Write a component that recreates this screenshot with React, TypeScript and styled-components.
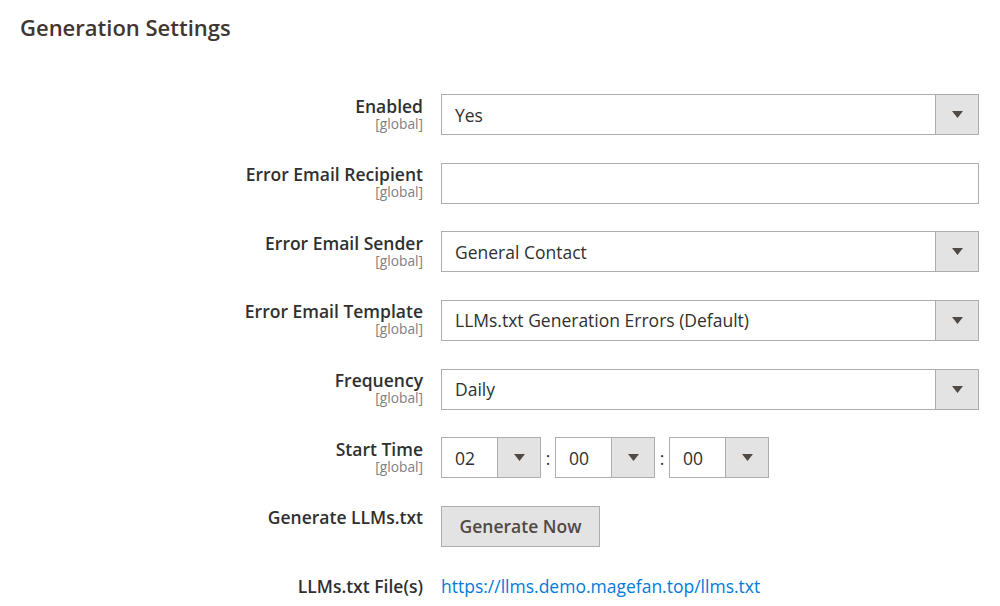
import React from 'react';
import styled, { createGlobalStyle } from 'styled-components';

const GlobalStyle = createGlobalStyle`
  body {
    margin: 0;
    background: #ffffff;
    font-family: 'Open Sans', 'Liberation Sans', sans-serif;
    color: #303030;
  }
`;

type Field =
  | { kind: 'select'; label: string; value: string }
  | { kind: 'input'; label: string }
  | { kind: 'time'; label: string; parts: string[] }
  | { kind: 'button'; label: string; text: string }
  | { kind: 'link'; label: string; href: string };

const fields: Field[] = [
  { kind: 'select', label: 'Enabled', value: 'Yes' },
  { kind: 'input', label: 'Error Email Recipient' },
  { kind: 'select', label: 'Error Email Sender', value: 'General Contact' },
  { kind: 'select', label: 'Error Email Template', value: 'LLMs.txt Generation Errors (Default)' },
  { kind: 'select', label: 'Frequency', value: 'Daily' },
  { kind: 'time', label: 'Start Time', parts: ['02', '00', '00'] },
  { kind: 'button', label: 'Generate LLMs.txt', text: 'Generate Now' },
  { kind: 'link', label: 'LLMs.txt File(s)', href: 'https://llms.demo.magefan.top/llms.txt' },
];

const Arrow = () => (
  <svg width="11" height="7" viewBox="0 0 11 7">
    <path d="M0 0 L11 0 L5.5 7 Z" fill="#514943" />
  </svg>
);

const App = () => {
  return (
    <Page>
      <GlobalStyle />
      <Title>Generation Settings</Title>
      <Fieldset>
        {fields.map((f) => (
          <Row key={f.label}>
            <Label>
              <LabelText>{f.label}</LabelText>
              {f.kind !== 'button' && f.kind !== 'link' && <Scope>[global]</Scope>}
            </Label>
            <Control>
              {f.kind === 'select' && (
                <Select>
                  <SelectValue>{f.value}</SelectValue>
                  <SelectToggle>
                    <Arrow />
                  </SelectToggle>
                </Select>
              )}
              {f.kind === 'input' && <TextInput />}
              {f.kind === 'time' && (
                <TimeGroup>
                  {f.parts.map((p, i) => (
                    <React.Fragment key={i}>
                      {i > 0 && <Colon>:</Colon>}
                      <Select $width={100}>
                        <SelectValue>{p}</SelectValue>
                        <SelectToggle>
                          <Arrow />
                        </SelectToggle>
                      </Select>
                    </React.Fragment>
                  ))}
                </TimeGroup>
              )}
              {f.kind === 'button' && <Button>{f.text}</Button>}
              {f.kind === 'link' && <Link href={f.href}>{f.href}</Link>}
            </Control>
          </Row>
        ))}
      </Fieldset>
    </Page>
  );
};

export default App;

const Page = styled.div`
  width: 1000px;
  height: 606px;
  overflow: hidden;
`;

const Title = styled.h2`
  margin: 0;
  padding: 14px 0 0 20px;
  font-size: 22px;
  font-weight: 600;
  line-height: 26px;
  color: #41362f;
`;

const Fieldset = styled.div`
  display: flex;
  flex-direction: column;
  gap: 27.67px;
  margin-top: 54px;
`;

const Row = styled.div`
  display: grid;
  grid-template-columns: 423px 538px;
  column-gap: 18px;
  align-items: start;
`;

const Label = styled.div`
  display: flex;
  flex-direction: column;
  align-items: flex-end;
  text-align: right;
  padding-top: 1.5px;
`;

const LabelText = styled.div`
  font-size: 17.5px;
  font-weight: 600;
  line-height: 20px;
  height: 20px;
  color: #303030;
`;

const Scope = styled.div`
  font-size: 13.75px;
  line-height: 15px;
  height: 15px;
  color: #808080;
`;

const Control = styled.div`
  display: flex;
  min-height: 41px;
  box-sizing: border-box;
`;

const Select = styled.div<{ $width?: number }>`
  display: flex;
  width: ${(p) => (p.$width ? `${p.$width}px` : '100%')};
  height: 41px;
  box-sizing: border-box;
  border: 1px solid #adadad;
  background: #ffffff;
`;

const SelectValue = styled.div`
  flex: 1;
  display: flex;
  align-items: center;
  padding-left: 13px;
  font-size: 17.5px;
  color: #303030;
`;

const SelectToggle = styled.div`
  width: 42px;
  display: flex;
  align-items: center;
  justify-content: center;
  background: #e3e3e3;
  border-left: 1px solid #adadad;
`;

const TextInput = styled.div`
  width: 100%;
  height: 41px;
  box-sizing: border-box;
  border: 1px solid #adadad;
`;

const TimeGroup = styled.div`
  display: flex;
  align-items: center;
  gap: 3.5px;
`;

const Colon = styled.span`
  width: 7px;
  text-align: center;
  font-size: 17.5px;
  color: #303030;
`;

const Button = styled.button`
  height: 41px;
  width: 159px;
  box-sizing: border-box;
  border: 1px solid #adadad;
  background: #e3e3e3;
  font-family: 'Open Sans', 'Liberation Sans', sans-serif;
  font-size: 17.5px;
  font-weight: 600;
  color: #514943;
  padding: 0;
`;

const Link = styled.a`
  padding-top: 1.5px;
  font-size: 17.5px;
  line-height: 20px;
  color: #007bdb;
  text-decoration: none;
`;
